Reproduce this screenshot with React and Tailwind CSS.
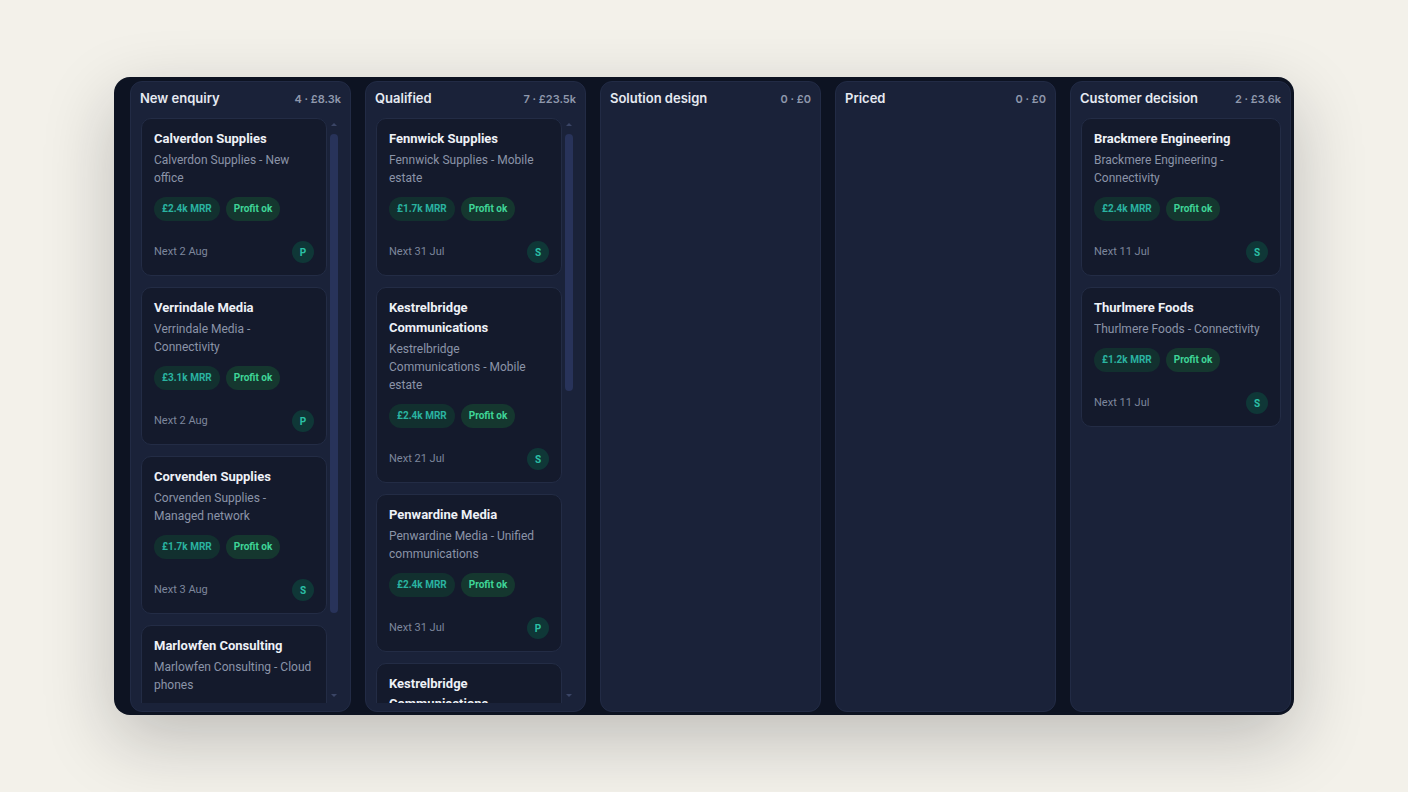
import React from "react";

const columns = [
  {
    name: "New enquiry",
    meta: "4 · £8.3k",
    thumb: [16, 479],
    deals: [
      { co: "Calverdon Supplies", desc: "Calverdon Supplies - New office", mrr: "£2.4k MRR", next: "Next 2 Aug", owner: "P" },
      { co: "Verrindale Media", desc: "Verrindale Media - Connectivity", mrr: "£3.1k MRR", next: "Next 2 Aug", owner: "P" },
      { co: "Corvenden Supplies", desc: "Corvenden Supplies - Managed network", mrr: "£1.7k MRR", next: "Next 3 Aug", owner: "S" },
      { co: "Marlowfen Consulting", desc: "Marlowfen Consulting - Cloud phones", mrr: "£1.1k MRR", next: "Next 4 Aug", owner: "P" },
    ],
  },
  {
    name: "Qualified",
    meta: "7 · £23.5k",
    thumb: [16, 257],
    deals: [
      { co: "Fennwick Supplies", desc: "Fennwick Supplies - Mobile estate", mrr: "£1.7k MRR", next: "Next 31 Jul", owner: "S" },
      { co: "Kestrelbridge Communications", desc: "Kestrelbridge Communications - Mobile estate", mrr: "£2.4k MRR", next: "Next 21 Jul", owner: "S" },
      { co: "Penwardine Media", desc: "Penwardine Media - Unified communications", mrr: "£2.4k MRR", next: "Next 31 Jul", owner: "P" },
      { co: "Kestrelbridge Communications", desc: "Kestrelbridge Communications - Connectivity", mrr: "£3.9k MRR", next: "Next 1 Aug", owner: "S" },
      { co: "Verrindale Media", desc: "Verrindale Media - Cloud phones", mrr: "£4.2k MRR", next: "Next 2 Aug", owner: "P" },
    ],
  },
  { name: "Solution design", meta: "0 · £0", deals: [] },
  { name: "Priced", meta: "0 · £0", deals: [] },
  {
    name: "Customer decision",
    meta: "2 · £3.6k",
    deals: [
      { co: "Brackmere Engineering", desc: "Brackmere Engineering - Connectivity", mrr: "£2.4k MRR", next: "Next 11 Jul", owner: "S" },
      { co: "Thurlmere Foods", desc: "Thurlmere Foods - Connectivity", mrr: "£1.2k MRR", next: "Next 11 Jul", owner: "S" },
    ],
  },
];

function DealCard({ deal }) {
  return (
    <div className="shrink-0 rounded-[10px] border border-[#232c45] bg-[#141a2c] px-3 pt-[10px] pb-3 font-['Roboto',sans-serif]">
      <div className="text-[13px] leading-5 font-bold text-[#eef1f7]">{deal.co}</div>
      <div className="mt-[2px] text-[12px] leading-[18px] text-[#8b94a8]">{deal.desc}</div>
      <div className="mt-[10px] flex gap-[6px]">
        <span className="h-6 rounded-full bg-[#12302f] px-2 text-[10px] leading-6 font-bold text-[#2ab3a0]">
          {deal.mrr}
        </span>
        <span className="h-6 rounded-full bg-[#15372f] px-2 text-[10px] leading-6 font-bold text-[#3fd598]">
          Profit ok
        </span>
      </div>
      <div className="mt-5 flex h-[22px] items-center justify-between">
        <span className="text-[11px] text-[#7d879c]">{deal.next}</span>
        <span className="flex h-[22px] w-[22px] items-center justify-center rounded-full bg-[#0f3737] text-[10px] font-bold text-[#2bc0a6]">
          {deal.owner}
        </span>
      </div>
    </div>
  );
}

function ScrollBar({ thumb }) {
  return (
    <div className="mr-[12px] ml-[3px] flex w-[8px] shrink-0 flex-col items-center">
      <div className="mt-[5px] h-0 w-0 border-x-[3px] border-b-[3px] border-x-transparent border-b-[#3a4566]" />
      <div className="w-full rounded-full bg-[#28335a]" style={{ marginTop: thumb[0] - 8, height: thumb[1] }} />
      <div className="flex-1" />
      <div className="mb-[6px] h-0 w-0 border-x-[3px] border-t-[3px] border-x-transparent border-t-[#3a4566]" />
    </div>
  );
}

function Column({ col }) {
  return (
    <div className="flex h-[631px] w-[221px] shrink-0 flex-col rounded-xl border border-[#222b45] bg-[#1a2239]">
      <div className="mb-[2px] flex h-[34px] shrink-0 items-center justify-between px-[9px] font-['Inter',sans-serif]">
        <span className="text-[13px] font-semibold text-[#e6eaf2]">{col.name}</span>
        <span className="text-[11px] font-semibold text-[#8f98ac]">{col.meta}</span>
      </div>
      <div className={"flex min-h-0 flex-1 pb-2 pl-[10px] " + (col.thumb ? "" : "pr-[9px]")}>
        <div className="flex min-w-0 flex-1 flex-col gap-[11px] overflow-hidden">
          {col.deals.map((d, i) => (
            <DealCard key={i} deal={d} />
          ))}
        </div>
        {col.thumb && <ScrollBar thumb={col.thumb} />}
      </div>
    </div>
  );
}

export default function App() {
  return (
    <main className="flex h-screen w-full items-center justify-center bg-[#f3f1ea]">
      <div className="flex h-[638px] w-[1180px] gap-[14px] overflow-hidden rounded-2xl bg-[#0d1322] pt-1 pl-4 shadow-[0_24px_70px_rgba(20,20,30,0.24)]">
        {columns.map((c) => (
          <Column key={c.name} col={c} />
        ))}
      </div>
    </main>
  );
}
